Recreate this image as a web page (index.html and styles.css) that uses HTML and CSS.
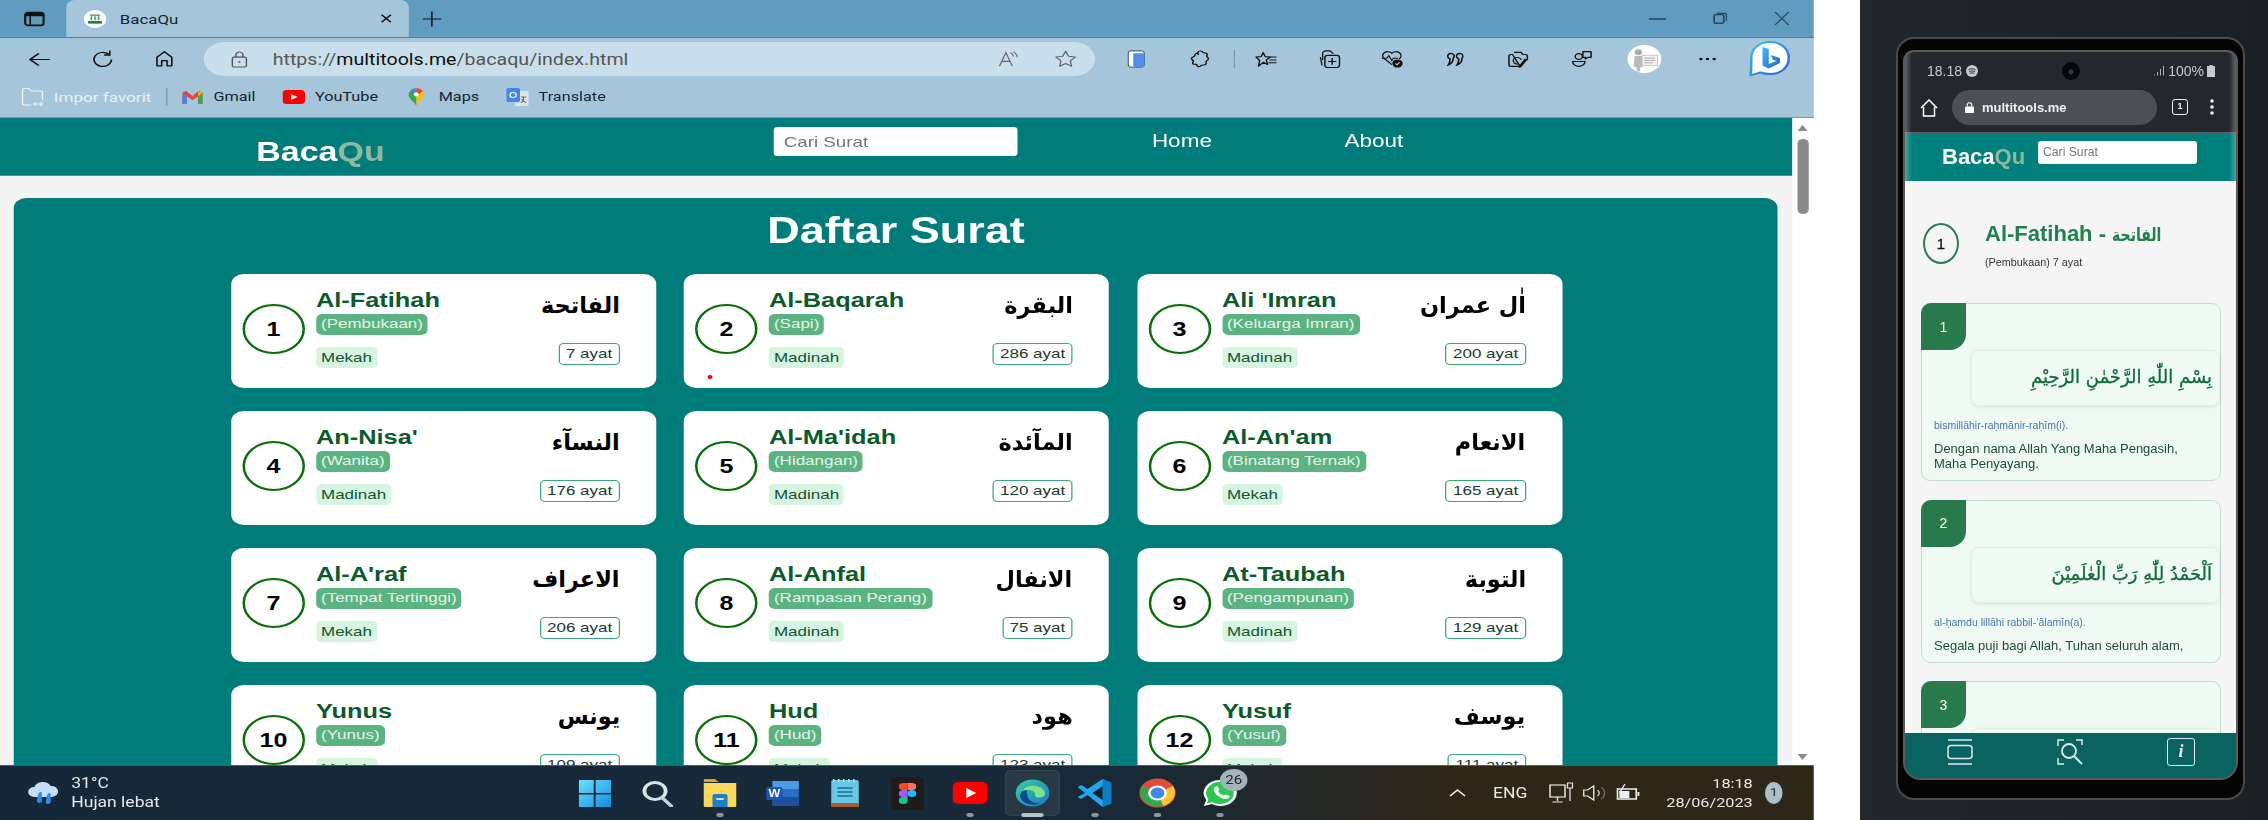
FILE: index.html
```html
<!DOCTYPE html>
<html lang="id">
<head>
<meta charset="utf-8">
<title>BacaQu</title>
<link rel="stylesheet" href="styles.css">
</head>
<body>
<div class="desktop">
  <div class="browser-frame">
    <div class="browser">
      <div class="tabstrip">
        <span class="strip-icon">
          <svg viewBox="0 0 18 16" width="17" height="16"><rect x="1.2" y="1.2" width="15.6" height="13.6" rx="2.5" fill="none" stroke="#111" stroke-width="1.8"/><path d="M1.2 3.5a2.3 2.3 0 0 1 2.3-2.3h11a2.3 2.3 0 0 1 2.3 2.3v1.7H1.200z" fill="#111"/><path d="M5.500 5v9.500" stroke="#111" stroke-width="1.300"/></svg>
        </span>
        <div class="tab">
          <svg class="favicon" viewBox="0 0 18 18" width="18" height="18"><circle cx="9" cy="9" r="9" fill="#fff"/><path d="M5 4.500h8v1.200H5zM5.500 6.300h1.200v4H5.500zM8.400 6.300h1.200v4H8.400zM11.300 6.300h1.200v4h-1.200z" fill="#2b9a4f"/><rect x="3.500" y="11" width="11" height="2.600" fill="#1c7c3a"/></svg>
          <span class="tab-title">BacaQu</span>
          <svg class="tab-close" viewBox="0 0 12 12" width="10" height="11"><path d="M1.500 1.500l9 9M10.500 1.500l-9 9" stroke="#111" stroke-width="1.500"/></svg>
        </div>
        <svg class="new-tab" viewBox="0 0 16 16" width="15" height="16"><path d="M8 0v16M0 8h16" stroke="#111" stroke-width="1.300"/></svg>
        <div class="win-controls">
          <svg viewBox="0 0 14 14" width="14" height="14"><path d="M0 7h14" stroke="#24465e" stroke-width="1.600"/></svg>
          <svg viewBox="0 0 14 14" width="12" height="13"><rect x="1.500" y="2.500" width="9" height="10" rx="1.500" fill="none" stroke="#24465e" stroke-width="1.600"/><path d="M4 1h7a2 2 0 0 1 2 2v7" fill="none" stroke="#24465e" stroke-width="1.300"/></svg>
          <svg viewBox="0 0 14 14" width="13" height="13"><path d="M1 0l12 14M13 0L1 14" stroke="#24465e" stroke-width="1.200"/></svg>
        </div>
      </div>

      <div class="toolbar">
        <span class="slot"><svg viewBox="0 0 20 20" width="19" height="15" preserveAspectRatio="none"><path d="M19 10H2M9.500 2L2 10l7.500 8" fill="none" stroke="#111" stroke-width="1.500"/></svg></span>
        <span class="slot"><svg viewBox="0 0 20 20" width="18" height="19"><path d="M15.500 4.200A7.800 7.800 0 1 0 18 10" fill="none" stroke="#111" stroke-width="1.400"/><path d="M16.500 0v5h-5" fill="none" stroke="#111" stroke-width="1.400"/></svg></span>
        <span class="slot"><svg viewBox="0 0 20 20" width="17" height="18"><path d="M3 18V8l7-6.500L17 8v10h-4.500v-6h-5v6z" fill="none" stroke="#111" stroke-width="1.500" stroke-linejoin="round"/></svg></span>
        <div class="address">
          <svg class="lock" viewBox="0 0 16 18" width="15" height="17"><rect x="2" y="6.500" width="12" height="10.500" rx="1.500" fill="none" stroke="#555" stroke-width="1.200"/><path d="M5 6.500V4a3 3 0 0 1 6 0v2.500" fill="none" stroke="#555" stroke-width="1.200"/><circle cx="8" cy="11.500" r="1" fill="#555"/></svg>
          <span class="url">https://<b>multitools.me</b>/bacaqu/index.html</span>
          <svg class="read" viewBox="0 0 24 20" width="19" height="16"><path d="M2 19L8.500 2 15 19M4.500 13h8" fill="none" stroke="#666" stroke-width="1.300"/><path d="M13 2a6 6 0 0 1 3 5M16 1a9 9 0 0 1 4 7" fill="none" stroke="#666" stroke-width="1.100"/></svg>
          <svg class="star" viewBox="0 0 20 20" width="19" height="18"><path d="M10 1.500l2.600 5.500 6 .8-4.400 4.200 1.100 6L10 15l-5.300 3 1.100-6L1.400 7.800l6-.8z" fill="none" stroke="#666" stroke-width="1.200" stroke-linejoin="round"/></svg>
        </div>
        <span class="slot slot-first"><svg viewBox="0 0 20 20" width="16" height="18" preserveAspectRatio="none"><rect x="2" y="1" width="16" height="18" rx="2.500" fill="#fff" stroke="#2b4a66" stroke-width="1"/><rect x="7" y="3.500" width="11" height="15.500" rx="1.500" fill="#4f8fe8"/></svg></span>
        <span class="slot"><svg viewBox="0 0 20 20" width="18" height="18"><path d="M8 2.500a2.500 2.500 0 0 1 4.500 0c.5 1 2 .5 3 1s1 2 .5 3 1 1.500 1.500 3-1.500 2-2 3 .5 2.500-.5 3.500-2.500.3-3.500 1-1.500 2-3 1.500-.5-2-2-2.500-2.500.5-3-1 1-2 .5-3-2-1.500-1.500-3 2-1 2.500-2 .5-2.500 1.500-3 2 .2 2 1.500z" fill="none" stroke="#111" stroke-width="1.300"/></svg></span>
        <span class="tool-sep"></span>
        <span class="slot"><svg viewBox="0 0 22 20" width="18" height="17"><path d="M8 1.500l2 5 5 .5-4 3.500 1.200 5.500L8 13.500 3.500 18l1-7L1 7l5-.5z" fill="none" stroke="#111" stroke-width="1.400" stroke-linejoin="round"/><path d="M15 7h6M14 10.500h7M13 14h8" stroke="#111" stroke-width="1.300"/></svg></span>
        <span class="slot"><svg viewBox="0 0 20 20" width="19" height="18"><path d="M4 11V4a3 3 0 0 1 3-3h3.500l3 3" fill="none" stroke="#111" stroke-width="1.200"/><path d="M2 8l1.500 9" stroke="#111" stroke-width="1.200"/><rect x="6" y="6" width="13" height="13.500" rx="2.500" fill="none" stroke="#111" stroke-width="1.300"/><path d="M12.500 9v7.500M8.800 12.800h7.400" stroke="#111" stroke-width="1.300"/></svg></span>
        <span class="slot"><svg viewBox="0 0 22 22" width="19" height="18"><path d="M11 18L3 10a5 5 0 0 1 8-6 5 5 0 0 1 8 6l-1 1" fill="none" stroke="#111" stroke-width="1.300"/><path d="M1 10h5l2-3 3 6 1.500-3H17" fill="none" stroke="#111" stroke-width="1.200"/><circle cx="16.500" cy="16.500" r="5" fill="#111"/><path d="M14.500 16.500l1.500 1.500 2.500-3" fill="none" stroke="#fff" stroke-width="1"/></svg></span>
        <span class="slot"><svg viewBox="0 0 20 20" width="14" height="14"><path d="M5 2a4 4 0 0 1 3 6.700C8 13 6 17 2 19c2-3 2.500-6 2.300-9.300A4 4 0 0 1 5 2zM15 2a4 4 0 0 1 3 6.700c0 4.300-2 8.300-6 10.300 2-3 2.500-6 2.300-9.300A4 4 0 0 1 15 2z" fill="none" stroke="#111" stroke-width="1.800"/></svg></span>
        <span class="slot"><svg viewBox="0 0 22 22" width="19" height="18"><path d="M7 3h7l1.500 2.500H18a2 2 0 0 1 2 2v5M13 20H4a2 2 0 0 1-2-2V7.500a2 2 0 0 1 2-2h1.500z" fill="none" stroke="#111" stroke-width="1.500"/><path d="M14 12a4 4 0 1 0-3 5" fill="none" stroke="#111" stroke-width="1.300"/><path d="M20 12l-6 9-2.500 1 .5-3 5.500-8.500z" fill="#111"/></svg></span>
        <span class="slot"><svg viewBox="0 0 22 22" width="19" height="18"><circle cx="8" cy="8" r="3.500" fill="none" stroke="#111" stroke-width="1.400"/><path d="M2 14h12a6 6 0 0 1-12 0z" fill="none" stroke="#111" stroke-width="1.400"/><path d="M12 2h8v7h-3.500l-2 2V9H12z" fill="none" stroke="#111" stroke-width="1.400" stroke-linejoin="round"/></svg></span>
        <span class="slot"><span class="avatar"><svg viewBox="0 0 28 28" width="27" height="28"><circle cx="9" cy="7" r="3" fill="#aaa"/><path d="M6 11h6l1 11H11l-1 5H8l-1-5H5z" fill="#bbb"/><rect x="12" y="10" width="13" height="11" fill="#f2f2f2" stroke="#aaa" stroke-width=".6"/><path d="M14 13h9M14 15.500h9M14 18h7" stroke="#888" stroke-width=".6"/></svg></span></span>
        <span class="slot"><svg viewBox="0 0 18 6" width="16" height="6"><circle cx="3" cy="3" r="1.500" fill="#111"/><circle cx="9" cy="3" r="1.500" fill="#111"/><circle cx="15" cy="3" r="1.500" fill="#111"/></svg></span>
        <span class="slot"><svg viewBox="0 0 34 36" width="34" height="36"><defs><linearGradient id="bingBlue" x1="0" y1="0" x2="1" y2="1"><stop offset="0" stop-color="#35c1f1"/><stop offset="1" stop-color="#2b5fd9"/></linearGradient></defs><path d="M17 1C8 1 2 8 2 17c0 6 0 13-.5 17 4-1 6-2 8-2.500 2.300 1 4.800 1.500 7.500 1.500 9 0 15-7 15-16S26 1 17 1z" fill="#fff" stroke="url(#bingBlue)" stroke-width="2"/><path d="M11 6l5 2v15l6-3-3-1.500-1.500-4.500L25 17v5l-9 5.500-5-3z" fill="url(#bingBlue)"/></svg></span>
      </div>

      <div class="bookmarks">
        <span class="mark mark-import"><svg viewBox="0 0 18 20" width="18" height="20"><path d="M8 18H2a1 1 0 0 1-1-1V3a1.500 1.500 0 0 1 1.500-1.500H6l2 2.500h7.500A1.500 1.500 0 0 1 17 5.500V13" fill="none" stroke="#eef4f8" stroke-width="1.100"/><path d="M10 17h7M12 15l-2 2 2 2M15 15l2 2-2 2" fill="none" stroke="#eef4f8" stroke-width="1"/></svg><span class="mark-pale">Impor favorit</span></span>
        <span class="mark-sep"></span>
        <span class="mark"><svg viewBox="0 0 18 14" width="18" height="14"><path d="M1 14V2.500L4 1l5 5 5-5 3 1.500V14h-3.500V6.500L9 10 4.500 6.500V14z" fill="#ea4335"/><path d="M1 14V2.500l3.500 4V14z" fill="#4285f4"/><path d="M17 14V2.500l-3.500 4V14z" fill="#34a853"/><path d="M13.500 1.800L17 2.500l-3.500 4z" fill="#fbbc04"/></svg>Gmail</span>
        <span class="mark"><svg viewBox="0 0 18 14" width="18" height="14"><rect width="18" height="14" rx="3.500" fill="#f00"/><path d="M7 4l5 3-5 3z" fill="#fff"/></svg>YouTube</span>
        <span class="mark mark-maps"><svg viewBox="0 0 16 20" width="14" height="20"><path d="M8 0a7 7 0 0 1 7 7c0 5-5 8-7 13z" fill="#fbbc04"/><path d="M8 0a7 7 0 0 0-7 7c0 5 5 8 7 13z" fill="#34a853"/><path d="M3 2a7 7 0 0 1 5-2v5a2.500 2.500 0 0 0-2 1z" fill="#4285f4"/><path d="M8 0a7 7 0 0 1 6 3.500L10 7a2.500 2.500 0 0 0-2-2z" fill="#ea4335"/><circle cx="8" cy="7" r="2.300" fill="#fff"/></svg>Maps</span>
        <span class="mark"><svg viewBox="0 0 18 18" width="18" height="18"><rect x="7" y="3" width="11" height="15" rx="1.500" fill="#dfe3ea"/><rect width="11" height="14" rx="1.500" fill="#4285f4"/><circle cx="5.500" cy="7" r="2.500" fill="none" stroke="#fff" stroke-width="1.100"/><path d="M12 9h4M14 9c0 3-1 5-2.500 6M12.500 11c.5 1.500 2 3 3.500 4" fill="none" stroke="#666" stroke-width=".9"/></svg>Translate</span>
      </div>

      <div class="viewport">
        <div class="page">
          <nav class="nav">
            <a class="logo">Baca<span class="logo-qu">Qu</span></a>
            <input class="search" type="text" placeholder="Cari Surat">
            <a class="nav-link nav-home">Home</a>
            <a class="nav-link nav-about">About</a>
          </nav>
          <main class="main">
            <h1 class="heading">Daftar Surat</h1>
            <div class="grid">
              <article class="surah"><div class="num">1</div><div class="info"><h2 class="name">Al-Fatihah</h2><span class="meaning">(Pembukaan)</span><span class="place">Mekah</span></div><div class="side"><p class="arabic" dir="rtl">الفاتحة</p><span class="count">7 ayat</span></div></article>
              <article class="surah"><div class="num">2</div><div class="info"><h2 class="name">Al-Baqarah</h2><span class="meaning">(Sapi)</span><span class="place">Madinah</span></div><div class="side"><p class="arabic" dir="rtl">البقرة</p><span class="count">286 ayat</span></div><span class="red-dot"></span></article>
              <article class="surah"><div class="num">3</div><div class="info"><h2 class="name">Ali 'Imran</h2><span class="meaning">(Keluarga Imran)</span><span class="place">Madinah</span></div><div class="side"><p class="arabic" dir="rtl">اٰل عمران</p><span class="count">200 ayat</span></div></article>
              <article class="surah"><div class="num">4</div><div class="info"><h2 class="name">An-Nisa'</h2><span class="meaning">(Wanita)</span><span class="place">Madinah</span></div><div class="side"><p class="arabic" dir="rtl">النسآء</p><span class="count">176 ayat</span></div></article>
              <article class="surah"><div class="num">5</div><div class="info"><h2 class="name">Al-Ma'idah</h2><span class="meaning">(Hidangan)</span><span class="place">Madinah</span></div><div class="side"><p class="arabic" dir="rtl">المآئدة</p><span class="count">120 ayat</span></div></article>
              <article class="surah"><div class="num">6</div><div class="info"><h2 class="name">Al-An'am</h2><span class="meaning">(Binatang Ternak)</span><span class="place">Mekah</span></div><div class="side"><p class="arabic" dir="rtl">الانعام</p><span class="count">165 ayat</span></div></article>
              <article class="surah"><div class="num">7</div><div class="info"><h2 class="name">Al-A'raf</h2><span class="meaning">(Tempat Tertinggi)</span><span class="place">Mekah</span></div><div class="side"><p class="arabic" dir="rtl">الاعراف</p><span class="count">206 ayat</span></div></article>
              <article class="surah"><div class="num">8</div><div class="info"><h2 class="name">Al-Anfal</h2><span class="meaning">(Rampasan Perang)</span><span class="place">Madinah</span></div><div class="side"><p class="arabic" dir="rtl">الانفال</p><span class="count">75 ayat</span></div></article>
              <article class="surah"><div class="num">9</div><div class="info"><h2 class="name">At-Taubah</h2><span class="meaning">(Pengampunan)</span><span class="place">Madinah</span></div><div class="side"><p class="arabic" dir="rtl">التوبة</p><span class="count">129 ayat</span></div></article>
              <article class="surah"><div class="num">10</div><div class="info"><h2 class="name">Yunus</h2><span class="meaning">(Yunus)</span><span class="place">Mekah</span></div><div class="side"><p class="arabic" dir="rtl">يونس</p><span class="count">109 ayat</span></div></article>
              <article class="surah"><div class="num">11</div><div class="info"><h2 class="name">Hud</h2><span class="meaning">(Hud)</span><span class="place">Mekah</span></div><div class="side"><p class="arabic" dir="rtl">هود</p><span class="count">123 ayat</span></div></article>
              <article class="surah"><div class="num">12</div><div class="info"><h2 class="name">Yusuf</h2><span class="meaning">(Yusuf)</span><span class="place">Mekah</span></div><div class="side"><p class="arabic" dir="rtl">يوسف</p><span class="count">111 ayat</span></div></article>
            </div>
          </main>
        </div>
        <div class="scrollbar">
          <span class="arrow-up"></span>
          <span class="thumb"></span>
          <span class="arrow-down"></span>
        </div>
      </div>

      <footer class="taskbar">
        <div class="weather">
          <svg class="weather-icon" viewBox="0 0 26 26" width="27" height="26"><path d="M6 17a5 5 0 0 1 0-10 7 7 0 0 1 13-1 5.500 5.500 0 0 1 1 11z" fill="#c6def8"/><path d="M9 14c2-3 3-3 3 0v7a2 2 0 0 1-4 0zM16 15c2-3 3-3 3 0v7a2 2 0 0 1-4 0z" fill="#2d8cf0"/></svg>
          <div class="weather-text"><span>31°C</span><span>Hujan lebat</span></div>
        </div>
        <div class="apps">
          <span class="app"><svg viewBox="0 0 26 27" width="26" height="27"><defs><linearGradient id="winG" x1="0" y1="0" x2="1" y2="1"><stop offset="0" stop-color="#6fe0ff"/><stop offset="1" stop-color="#0d8de0"/></linearGradient></defs><path d="M0 1a1 1 0 0 1 1-1h11v13H0zM13.500 0H25a1 1 0 0 1 1 1v12H13.500zM0 14.500h12V27H1a1 1 0 0 1-1-1zM13.500 14.500H26V26a1 1 0 0 1-1 1H13.500z" fill="url(#winG)"/></svg></span>
          <span class="app"><svg viewBox="0 0 26 27" width="26" height="27"><circle cx="11" cy="11" r="8.500" fill="none" stroke="#d9e4ea" stroke-width="3"/><path d="M17 18l7 8" stroke="#c6d2d9" stroke-width="3" stroke-linecap="round"/></svg></span>
          <span class="app app-on"><svg viewBox="0 0 28 30" width="28" height="30"><path d="M1 2a1 1 0 0 1 1-1h8l3 3H1z" fill="#e0a520"/><path d="M1 5h26v23a1 1 0 0 1-1 1H2a1 1 0 0 1-1-1z" fill="#fbd75b"/><path d="M8 18a2 2 0 0 1 2-2h8a2 2 0 0 1 2 2v11H8z" fill="#1f7fc4"/><rect x="11" y="20" width="6" height="2" fill="#bfe2ff"/></svg></span>
          <span class="app"><svg viewBox="0 0 28 27" width="28" height="27"><rect x="6" y="1" width="21" height="25" rx="1.500" fill="#2b6fc9"/><rect x="6" y="1" width="21" height="8" fill="#4a9bea"/><rect x="6" y="17" width="21" height="9" fill="#1d4f9e"/><rect x="1" y="7" width="13" height="13" rx="1.500" fill="#1b57b3"/><text x="7.500" y="17" class="app-letter">W</text></svg></span>
          <span class="app"><svg viewBox="0 0 26 30" width="26" height="30"><rect x="2" y="2" width="22" height="26" rx="1.500" fill="#69c6e4"/><path d="M4 1v3M8 1v3M12 1v3M16 1v3M20 1v3" stroke="#b7eafb" stroke-width="1.200"/><path d="M7 10h12M7 14h12M7 18h12" stroke="#1c6e8c" stroke-width="1.600"/><rect x="2" y="25" width="22" height="4" fill="#a85a2b"/></svg></span>
          <span class="app"><span class="figma-tile"><svg viewBox="0 0 14 21" width="14" height="21"><path d="M7 0h3.500a3.500 3.500 0 0 1 0 7H7z" fill="#ff7262"/><path d="M7 0H3.500a3.500 3.500 0 0 0 0 7H7z" fill="#f24e1e"/><path d="M7 7H3.500a3.500 3.500 0 0 0 0 7H7z" fill="#a259ff"/><circle cx="10.500" cy="10.500" r="3.500" fill="#1abcfe"/><path d="M7 14H3.500A3.500 3.500 0 1 0 7 17.500z" fill="#0acf83"/></svg></span></span>
          <span class="app app-on"><svg viewBox="0 0 28 22" width="28" height="22"><rect width="28" height="22" rx="5" fill="#f00"/><path d="M11 6l8 5-8 5z" fill="#fff"/></svg></span>
          <span class="app app-on app-active"><svg viewBox="0 0 28 28" width="28" height="28"><defs><linearGradient id="edgeG" x1="0" y1="0" x2="1" y2="1"><stop offset="0" stop-color="#36d0a0"/><stop offset="1" stop-color="#1a78c8"/></linearGradient></defs><circle cx="14" cy="14" r="13.500" fill="url(#edgeG)"/><path d="M6 14c0-5 5-8 10-7 5 .5 8 4 8 8 0 2-2 3.500-5 3.500-2 0-3-1-3-2 1-3-2-6-6-5.500-3 .5-4 2-4 3z" fill="#7ae582"/><path d="M10 16c0 5 5 9 10 8-5 4-15 1-16-7 0-3 2-6 6-6-1 1-1 3 0 5z" fill="#0c4a8c"/></svg></span>
          <span class="app app-on"><svg viewBox="0 0 28 30" width="28" height="30"><path d="M20 1l7 3.500v21L20 29 8 17l-5 4-3-2 6-4-6-6 3-2 5 4z" fill="#22a5ea"/><path d="M20 1v28l7-3.500v-21z" fill="#0b7cc8"/><path d="M20 8v14l-8-7z" fill="#151f2c"/></svg></span>
          <span class="app app-on"><svg viewBox="0 0 30 30" width="30" height="30"><circle cx="15" cy="15" r="14.500" fill="#e24a3b"/><path d="M15 15L27.500 8a14.500 14.500 0 0 1-8 20z" fill="#fbc62f"/><path d="M15 15L19.500 28A14.500 14.500 0 0 1 2.500 8z" fill="#2fa84f"/><circle cx="15" cy="15" r="7.500" fill="#fff"/><circle cx="15" cy="15" r="5.500" fill="#3f86f0"/></svg></span>
          <span class="app app-on app-wa"><svg viewBox="0 0 28 30" width="28" height="30"><path d="M14 2a13 13 0 0 0-11 20L1 28l6.500-2A13 13 0 1 0 14 2z" fill="#fff"/><path d="M14 4a11 11 0 0 0-9.300 17L3.500 25.500l4.500-1.300A11 11 0 1 0 14 4z" fill="#2cc84d"/><path d="M10 9c1-1 2-1 2.500 0l1 2.500-1 1.500c1 2 2.500 3.500 4.500 4.500l1.500-1 2.500 1c1 .5 1 1.500 0 2.500-2 2-5 1-8-1.500S8 12 10 9z" fill="#fff"/></svg><span class="wa-badge">26</span></span>
        </div>
        <div class="tray">
          <svg class="tray-chev" viewBox="0 0 14 8" width="14" height="8"><path d="M1 7l6-6 6 6" fill="none" stroke="#eee" stroke-width="1.300"/></svg>
          <span class="tray-lang">ENG</span>
          <svg class="tray-net" viewBox="0 0 20 22" width="20" height="22"><rect x="1" y="3" width="12" height="12" fill="none" stroke="#e6e6e6" stroke-width="1.200"/><path d="M7 15v4M3 20h8" stroke="#e6e6e6" stroke-width="1.200"/><rect x="15" y="1" width="4" height="5" fill="none" stroke="#e6e6e6" stroke-width="1"/><path d="M17 6v13" stroke="#e6e6e6" stroke-width="1"/></svg>
          <svg class="tray-vol" viewBox="0 0 20 18" width="20" height="18"><path d="M2 6h3l5-4v14l-5-4H2z" fill="none" stroke="#e6e6e6" stroke-width="1.100"/><path d="M13 6a4 4 0 0 1 0 6" fill="none" stroke="#e6e6e6" stroke-width="1"/><path d="M16 3a8 8 0 0 1 0 12" fill="none" stroke="#77705f" stroke-width="1"/></svg>
          <svg class="tray-bat" viewBox="0 0 20 18" width="20" height="18"><path d="M2 5h15v10H2z" fill="none" stroke="#eee" stroke-width="1.300"/><path d="M18 8h1.500v4H18z" fill="#eee"/><path d="M3.500 7h8v7h-8z" fill="#eee"/><path d="M8 0L4 8h3l-1 5" fill="none" stroke="#eee" stroke-width="1.100"/></svg>
          <div class="clock"><span>18:18</span><span>28/06/2023</span></div>
          <span class="notify">1</span>
        </div>
      </footer>
    </div>
  </div>

  <aside class="phone-panel">
    <div class="phone">
      <div class="screen">
        <div class="status">
          <span class="status-left">18.18 <svg viewBox="0 0 12 12" width="12" height="12"><circle cx="6" cy="6" r="6" fill="#c7c9cc"/><path d="M2.500 4.500c2-1 5-1 7 .3M3 6.500c2-.8 4.500-.7 6 .2M3.500 8.300c1.500-.6 3.500-.5 5 .2" stroke="#24282d" stroke-width=".9" fill="none"/></svg></span>
          <span class="camera"></span>
          <span class="status-right"><svg viewBox="0 0 12 10" width="12" height="10"><path d="M1 8.500h1v1H1zM4 6h1v3.500H4zM7 3h1v6.500H7zM10 0h1v9.500h-1z" fill="#aeb1b4"/></svg>100%<svg viewBox="0 0 8 12" width="8" height="12"><path d="M2.500 0h3v1H8v11H0V1h2.500z" fill="#c7c9cc"/></svg></span>
        </div>
        <div class="mobile-bar">
          <svg class="m-home" viewBox="0 0 18 18" width="18" height="18"><path d="M1 9l8-8 8 8M3.500 8v9h11V8" fill="none" stroke="#fff" stroke-width="1.500"/></svg>
          <div class="m-url"><svg viewBox="0 0 10 12" width="9" height="11"><rect y="5" width="10" height="7" rx="1" fill="#fff"/><path d="M2.500 5V3.300a2.500 2.500 0 0 1 5 0V5" fill="none" stroke="#fff" stroke-width="1.200"/></svg><span>multitools.me</span></div>
          <span class="m-tabs">1</span>
          <svg class="m-dots" viewBox="0 0 4 16" width="4" height="16"><circle cx="2" cy="2" r="1.800" fill="#eee"/><circle cx="2" cy="8" r="1.800" fill="#eee"/><circle cx="2" cy="14" r="1.800" fill="#eee"/></svg>
        </div>
        <div class="m-header">
          <span class="m-logo">Baca<span class="logo-qu">Qu</span></span>
          <input class="m-search" type="text" placeholder="Cari Surat">
        </div>
        <div class="m-body">
          <div class="m-surah">
            <div class="m-num">1</div>
            <div class="m-titles">
              <h2 class="m-title">Al-Fatihah - <span class="m-title-ar">الفاتحة</span></h2>
              <p class="m-sub">(Pembukaan) 7 ayat</p>
            </div>
          </div>
          <article class="verse">
            <div class="verse-no">1</div>
            <div class="verse-ar" dir="rtl">بِسْمِ اللّٰهِ الرَّحْمٰنِ الرَّحِيْمِ</div>
            <p class="verse-latin">bismillāhir-raḥmānir-raḥīm(i).</p>
            <p class="verse-id">Dengan nama Allah Yang Maha Pengasih, Maha Penyayang.</p>
          </article>
          <article class="verse">
            <div class="verse-no">2</div>
            <div class="verse-ar" dir="rtl">اَلْحَمْدُ لِلّٰهِ رَبِّ الْعٰلَمِيْنَ</div>
            <p class="verse-latin">al-ḥamdu lillāhi rabbil-‘ālamīn(a).</p>
            <p class="verse-id">Segala puji bagi Allah, Tuhan seluruh alam,</p>
          </article>
          <article class="verse">
            <div class="verse-no">3</div>
            <div class="verse-ar" dir="rtl">اَلرَّحْمٰنِ الرَّحِيْمِ</div>
          </article>
        </div>
        <div class="m-nav">
          <svg viewBox="0 0 26 26" width="26" height="26"><path d="M1 1h24M1 25h24" stroke="#dfeceb" stroke-width="1.500"/><rect x="1" y="6.500" width="24" height="13" rx="3" fill="none" stroke="#dfeceb" stroke-width="1.500"/></svg>
          <svg viewBox="0 0 26 26" width="26" height="26"><path d="M1 7V1h6M19 1h6v5M1 19v6h6" fill="none" stroke="#dfeceb" stroke-width="1.500"/><circle cx="12" cy="12" r="7" fill="none" stroke="#dfeceb" stroke-width="1.800"/><path d="M17 17l8 8" stroke="#dfeceb" stroke-width="2"/></svg>
          <span class="m-info">i</span>
        </div>
      </div>
    </div>
  </aside>
</div>
</body>
</html>
```
FILE: styles.css
```css
* { box-sizing: border-box; }
html, body { margin: 0; padding: 0; width: 2268px; height: 820px; overflow: hidden; background: #fff; }
body { font-family: "Liberation Sans", Arial, sans-serif; }

.desktop { display: flex; width: 2268px; height: 820px; }

/* The left window is 1451.2 px wide, stretched 1.25x across as in the screenshot */
.browser-frame { flex: 0 0 1814px; height: 820px; overflow: hidden; filter: blur(.35px); }
.browser { width: 1451.2px; height: 820px; display: flex; flex-direction: column; transform: scaleX(1.25); transform-origin: 0 0; font-family: Roboto, "Liberation Sans", sans-serif; }

/* Tab strip */
.tabstrip { flex: 0 0 37px; display: flex; align-items: center; background: #5f9cbf; border-bottom: 1px solid #4c80a0; }
.strip-icon { display: flex; margin-left: 19px; width: 33.800px; }
.tab { align-self: flex-start; height: 37px; width: 274px; display: flex; align-items: center; background: #a5c6da; border-radius: 7px 7px 0 0; padding: 0 0 0 14px; }
.favicon { flex: none; }
.tab-title { margin-left: 11px; font-size: 13.500px; color: #16242e; }
.tab-close { margin-left: auto; margin-right: 13px; }
.new-tab { margin-left: 11px; }
.win-controls { margin-left: auto; display: flex; align-items: center; gap: 37px; margin-right: 19px; }

/* Toolbar */
.toolbar { flex: 0 0 42px; display: flex; align-items: center; background: #a5c6da; padding-left: 6px; }
.slot { flex: 0 0 50.400px; display: flex; align-items: center; justify-content: center; }
.slot-first { margin-left: 8px; }
.address { flex: 0 0 713px; height: 34px; margin-left: 6px; display: flex; align-items: center; background: #c9dfeb; border-radius: 17px; padding: 0 14px 0 21px; }
.lock { flex: none; }
.url { margin-left: 19px; font-size: 15.700px; color: #555; white-space: nowrap; }
.url b { font-weight: 400; color: #111; }
.read { margin-left: auto; }
.star { margin-left: 26px; }
.tool-sep { flex: 0 0 1px; height: 18px; background: #7d97a8; margin: 0 0 0 2px; }
.avatar { width: 27px; height: 28px; border-radius: 50%; background: #fff; overflow: hidden; display: flex; }

/* Bookmarks */
.bookmarks { flex: 0 0 38px; display: flex; align-items: center; background: #a5c6da; border-bottom: 1px solid #7f96a8; padding: 0 0 4px 17px; font-size: 13px; color: #16242e; gap: 21.500px; }
.mark { display: flex; align-items: center; gap: 8px; white-space: nowrap; }
.mark-maps { gap: 11px; margin-left: 2px; }
.mark-pale { color: #e9f1f6; font-size: 13.700px; }
.mark-sep { width: 1px; height: 18px; background: #7d97a8; margin: 0 -10.900px 0 -9.500px; }

/* Page */
.viewport { flex: 1; min-height: 0; display: flex; overflow: hidden; }
.page { flex: 0 0 1433.600px; background: #f4f4f4; font-family: "Liberation Sans", Arial, sans-serif; overflow: hidden; }
.nav { height: 58px; display: flex; align-items: center; background: #007d7b; border-bottom: 1px solid #3c9c9a; padding: 0 0 0 205px; }
.logo { font-size: 27.200px; font-weight: 700; color: #fff; margin-top: 10px; width: 101.500px; }
.logo-qu { color: #8fb8a0; }
.search { width: 195px; height: 29px; margin-left: 312.500px; margin-top: -11px; border: 0; border-radius: 3px; padding: 0 8px; font: 15px "Liberation Sans", Arial, sans-serif; background: #fff; }
.search::placeholder { color: #757575; }
.nav-link { font-size: 18px; color: #fff; margin-top: -10px; }
.nav-home { margin-left: 107.500px; }
.nav-about { margin-left: 106px; }

.main { margin: 22px 11.200px 0; padding: 12px 0 30px; background: #007d7b; border-radius: 10px; }
.heading { margin: 0 0 23px; font-size: 36px; line-height: 41px; font-weight: 700; color: #fff; text-align: center; }
.grid { width: 1064.800px; margin: 0 0 0 173.600px; display: grid; grid-template-columns: repeat(3, 340px); column-gap: 22.400px; row-gap: 23px; }
.surah { position: relative; height: 114px; display: flex; background: #fff; border-radius: 10px; padding: 0 29px 0 9px; }
.num { flex: 0 0 50px; width: 50px; height: 50px; margin: 30px 9px 0 0; border: 2px solid #067006; border-radius: 50%; display: flex; align-items: center; justify-content: center; font-size: 20px; font-weight: 700; color: #000; }
.info { flex: 1; min-width: 0; display: flex; flex-direction: column; align-items: flex-start; padding-top: 15px; }
.name { margin: 0; font-size: 20.300px; line-height: 23px; font-weight: 700; color: #0a5a2c; }
.meaning { margin-top: 2px; height: 21px; padding: 0 4px; line-height: 20px; font-size: 13.600px; color: #e6f5ec; background: #5bb381; border-radius: 5px; white-space: nowrap; }
.place { margin-top: 12px; height: 21px; padding: 0 4px; line-height: 21px; font-size: 13.600px; color: #155233; background: #d5f5e0; border-radius: 4px; }
.side { flex: none; display: flex; flex-direction: column; align-items: flex-end; padding-top: 15px; }
.arabic { margin: 0; height: 32px; line-height: 32px; font-family: "DejaVu Sans", sans-serif; font-size: 23px; font-weight: 700; color: #000; white-space: nowrap; transform: scaleX(.78); transform-origin: right center; }
.count { margin-top: 22px; height: 22px; padding: 0 5px; line-height: 19px; font-size: 13.600px; color: #1b3b2b; border: 1px solid #3aa87a; border-radius: 4px; background: #fff; white-space: nowrap; }
.red-dot { position: absolute; left: 19px; top: 101px; width: 4px; height: 4px; border-radius: 50%; background: #f00; }

/* Scrollbar */
.scrollbar { flex: 1; background: #fff; display: flex; flex-direction: column; align-items: center; padding-top: 7px; }
.arrow-up { width: 0; height: 0; border: 4.500px solid transparent; border-top: 0; border-bottom: 6px solid #8a8a8a; }
.thumb { width: 9px; height: 75px; margin-top: 8px; background: #8a8a8a; border-radius: 4.500px; }
.arrow-down { width: 0; height: 0; margin-top: auto; margin-bottom: 5px; border: 4.500px solid transparent; border-bottom: 0; border-top: 6px solid #8a8a8a; }

/* Taskbar */
.taskbar { flex: 0 0 55px; display: flex; align-items: center; border-top: 1px solid #565a5c; background: linear-gradient(90deg, #152838 0%, #182a38 62%, #2e2618 80%, #2e2618 100%); color: #e8e8e8; font-family: Roboto, "Liberation Sans", sans-serif; font-size: 13px; }
.weather { flex: 0 0 451px; display: flex; align-items: center; padding-left: 21px; }
.weather-icon { flex: none; }
.weather-text { margin-left: 9px; display: flex; flex-direction: column; gap: 4px; line-height: 15px; font-size: 14px; }
.apps { display: flex; }
.app { position: relative; flex: 0 0 50px; height: 54px; display: flex; align-items: center; justify-content: center; }
.app-on::after { content: ""; position: absolute; left: 50%; bottom: 3px; width: 6px; height: 4px; margin-left: -3px; border-radius: 2px; background: #8b969e; }
.app-active::before { content: ""; position: absolute; left: 3px; right: 3px; top: 4px; bottom: 4px; background: rgba(255,255,255,.07); border: 1px solid rgba(255,255,255,.05); border-radius: 5px; }
.app-active::after { width: 18px; margin-left: -9px; background: #b9c4cb; }
.app svg { position: relative; }
.app-letter { font: 700 10px "Liberation Sans", Arial, sans-serif; fill: #fff; text-anchor: middle; }
.figma-tile { display: flex; padding: 6px 6px; background: #1d1c1a; border-radius: 3px; }
.wa-badge { position: absolute; left: 25px; top: 3px; width: 22px; height: 22px; border-radius: 50%; background: #a3b3bb; color: #20282e; font-size: 12px; line-height: 22px; text-align: center; }
.tray { margin-left: auto; display: flex; align-items: center; padding-right: 25px; }
.tray-chev { margin-right: 21px; }
.tray-lang { font-size: 14px; width: 28px; text-align: center; margin-right: 17px; }
.tray-net { margin-right: 6px; }
.tray-vol { margin-right: 7px; }
.tray-bat { margin-right: 19px; }
.clock { width: 71px; display: flex; flex-direction: column; align-items: flex-end; gap: 4px; line-height: 15px; }
.notify { width: 14px; height: 22px; margin-left: 10px; border-radius: 50%; background: #a9c0cc; color: #222; font-size: 11px; line-height: 22px; text-align: center; }

/* Phone panel */
.phone-panel { flex: 0 0 408px; margin-left: 46px; height: 820px; background: linear-gradient(90deg, #22272c, #1b2025); padding: 37px 0 0 36px; filter: blur(.3px); }
.phone { width: 349px; height: 763px; padding: 12px 6px 19px; background: #050505; border: 2px solid #4b4b4b; border-radius: 18px; }
.screen { position: relative; height: 726px; display: flex; flex-direction: column; background: #24282d; border-radius: 9px 9px 16px 16px; box-shadow: 0 0 0 2px #5a5a5a; margin: 1px 1px 0; overflow: hidden; font-family: "Liberation Sans", Arial, sans-serif; }
.screen::after { content: ""; position: absolute; inset: 0; pointer-events: none; background: linear-gradient(90deg, rgba(255,255,255,.28), transparent 7px, transparent calc(100% - 7px), rgba(255,255,255,.28)); }
.status { flex: 0 0 38px; display: flex; align-items: center; padding: 0 21px 0 22px; color: #c7c9cc; font-size: 14px; }
.status-left { flex: 1; display: flex; align-items: center; gap: 4px; }
.camera { width: 18px; height: 18px; border-radius: 50%; background: radial-gradient(circle at 50% 55%, #263a52 0 2px, #04070a 3px); }
.status-right { flex: 1; display: flex; align-items: center; justify-content: flex-end; gap: 3px; }
.mobile-bar { flex: 0 0 43px; display: flex; align-items: flex-start; padding-left: 15px; border-bottom: 1px solid #5b6065; }
.m-home { margin-top: 9px; }
.m-url { width: 205px; height: 35px; margin-left: 14px; display: flex; align-items: center; gap: 8px; padding-left: 13px; border-radius: 18px; background: #4c5055; color: #eef0f1; font-size: 13px; font-weight: 700; }
.m-tabs { width: 16px; height: 16px; margin: 9px 0 0 15px; border: 1.500px solid #eee; border-radius: 3px; color: #eee; font-size: 9px; font-weight: 700; line-height: 13px; text-align: center; }
.m-dots { margin: 9px 0 0 22px; }
.m-header { flex: 0 0 48px; display: flex; align-items: flex-start; background: #00807c; padding-left: 37px; }
.m-logo { margin-top: 11px; width: 96px; font-size: 22px; line-height: 26px; font-weight: 700; color: #fff; }
.m-search { width: 159px; height: 23px; margin-top: 8px; border: 0; border-radius: 3px; padding: 0 5px 2px; font: 12.200px "Liberation Sans", Arial, sans-serif; background: #fff; }
.m-search::placeholder { color: #757575; }
.m-body { flex: 1; min-height: 0; overflow: hidden; background: #f5f5f5; padding: 42px 16px 0; }
.m-surah { display: flex; height: 80px; padding-left: 2px; }
.m-num { flex: 0 0 36px; height: 41px; border: 2px solid #2a7d50; border-radius: 50%; display: flex; align-items: center; justify-content: center; font-size: 15px; color: #111; -webkit-text-stroke: .3px #111; }
.m-titles { margin-left: 26px; }
.m-title { margin: -2px 0 0; font-size: 22px; line-height: 26px; font-weight: 700; color: #218050; white-space: nowrap; }
.m-title-ar { display: inline-block; font-family: "DejaVu Sans", sans-serif; font-size: 18px; line-height: 22px; transform: scaleX(.78); transform-origin: left center; }
.m-sub { margin: 9px 0 0; font-size: 10.800px; line-height: 13px; color: #333; }
.verse { position: relative; width: 300px; margin-bottom: 18.500px; padding-bottom: 9px; background: #f0faf4; border: 1px solid #c5dccf; border-radius: 9px; }
.verse-no { width: 45px; height: 47px; margin: -1px 0 0 -1px; background: #28794c; border-radius: 10px 0 16px 0; color: #fff; font-size: 14px; display: flex; align-items: center; justify-content: center; }
.verse-ar { margin-left: 49px; height: 56px; padding: 0 7px; border: 1px solid #e1eee6; border-radius: 8px; box-shadow: 0 1px 3px rgba(60,110,80,.16); font-family: "DejaVu Sans", sans-serif; font-size: 18px; line-height: 52px; color: #0f6b3a; -webkit-text-stroke: .3px #0f6b3a; white-space: nowrap; }
.verse-latin { margin: 13px 0 0 12px; font-size: 10.500px; line-height: 13px; color: #4a76a8; }
.verse-id { margin: 9px 12px 0; font-size: 13px; line-height: 15px; color: #1d4c3a; }
.m-nav { flex: 0 0 45px; display: flex; align-items: flex-start; background: #0a6360; padding: 6px 0 0 42px; gap: 84px; position: relative; z-index: 1; }
.m-info { width: 28px; height: 28px; margin-top: -1px; border: 1.500px solid #dfeceb; border-radius: 3px; color: #dfeceb; font: italic 700 18px/25px "Liberation Serif", serif; text-align: center; }
```
